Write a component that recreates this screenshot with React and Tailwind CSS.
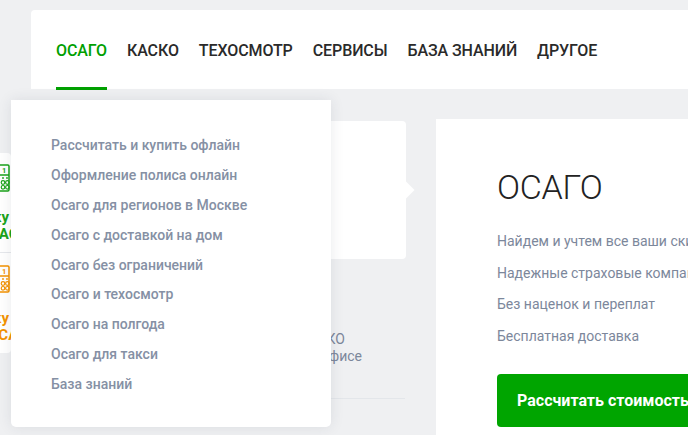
import React from "react";

const navItems = ["ОСАГО", "КАСКО", "ТЕХОСМОТР", "СЕРВИСЫ", "БАЗА ЗНАНИЙ", "ДРУГОЕ"];
const menu = [
  "Рассчитать и купить офлайн",
  "Оформление полиса онлайн",
  "Осаго для регионов в Москве",
  "Осаго с доставкой на дом",
  "Осаго без ограничений",
  "Осаго и техосмотр",
  "Осаго на полгода",
  "Осаго для такси",
  "База знаний",
];
const bullets = [
  "Найдем и учтем все ваши скидки",
  "Надежные страховые компании",
  "Без наценок и переплат",
  "Бесплатная доставка",
];

function TicketIcon({ color }) {
  return (
    <svg width="40" height="28" viewBox="0 0 40 28" fill="none">
      <rect x="1" y="1" width="38" height="26" rx="1.2" stroke={color} strokeWidth="1.5" />
      <line x1="1" y1="11" x2="39" y2="11" stroke={color} strokeWidth="1.5" />
      <text x="32" y="9" fill={color} fontSize="7.5" fontWeight="700" fontFamily="Roboto, sans-serif">1</text>
      <circle cx="33" cy="14" r="0.9" fill={color} />
      <circle cx="37" cy="14" r="0.9" fill={color} />
      <circle cx="33" cy="18.5" r="1.8" stroke={color} strokeWidth="1.2" />
      <circle cx="33" cy="23.3" r="1.8" stroke={color} strokeWidth="1.2" />
      <circle cx="37.4" cy="18.5" r="1.8" stroke={color} strokeWidth="1.2" />
      <circle cx="37.4" cy="23.3" r="1.8" stroke={color} strokeWidth="1.2" />
    </svg>
  );
}

function PromoBlock({ color, line1, line2, shift, border, pt }) {
  return (
    <div className={`h-[100px] flex flex-col items-end pr-[1px] ${pt} ${border ? "border-b border-[#e6e8ec]" : ""}`}>
      <TicketIcon color={color} />
      <div className="mt-[17px] w-full text-[15px] font-bold leading-[17px] whitespace-nowrap" style={{ color }}>
        <div className="text-right pr-[1px]">{line1}</div>
        <div className={shift}>{line2}</div>
      </div>
    </div>
  );
}

export default function App() {
  return (
    <div className="relative w-[688px] h-[435px] overflow-hidden bg-[#eff0f2] font-['Roboto',sans-serif]">
      {/* Header */}
      <div className="ml-[31px] mt-[10px] h-[79px] bg-white rounded-tl-[4px] flex items-stretch pl-[25px] gap-[20px]">
        {navItems.map((item, i) => (
          <div key={item} className="relative flex items-center pt-[2px]">
            <span
              className={`text-[16px] font-medium tracking-[-0.1px] ${i === 0 ? "text-[#00a000]" : "text-[#2a2a2a]"}`}
            >
              {item}
            </span>
            {i === 0 && <div className="absolute left-0 right-0 bottom-[-1px] h-[3px] bg-[#00a000]" />}
          </div>
        ))}
      </div>

      {/* Body */}
      <div className="flex mt-[31px]">
        {/* Column A: partial card on the left */}
        <div className="ml-[-129px] w-[140px] shrink-0 pt-[33px]">
          <div className="bg-white rounded-[4px] h-[200px] flex flex-col">
            <PromoBlock color="#1aa31a" line1="Скидку" line2="КАСКО" shift="pl-[118px]" pt="pt-[11px]" border />
            <PromoBlock color="#f39200" line1="Скидку" line2="ОСАГО" shift="pl-[117px]" pt="pt-[12px]" />
          </div>
        </div>

        {/* Column B */}
        <div className="ml-[20px] w-[375px] shrink-0 pt-[1px]">
          <div className="relative bg-white rounded-[4px] h-[138px]">
            <div className="absolute right-[-6px] top-[63px] w-[12px] h-[12px] bg-white rotate-45" />
          </div>
          <div className="mt-[72px] text-[14px] leading-[17px] text-[#7c879b]">
            <div className="text-right pr-[61px]">ОСАГО и КАСКО</div>
            <div className="text-right pr-[44px]">в нашем офисе</div>
          </div>
          <div className="mt-[33px] w-[374px] border-t border-[#e3e6ea]" />
        </div>

        {/* Column C: main card */}
        <div className="ml-[30px] w-[300px] shrink-0 bg-white h-[400px] mt-[-1px] pl-[61px] pt-[48px]">
          <h1 className="text-[34px] font-light leading-[40px] text-[#222] tracking-[-0.3px]">ОСАГО</h1>
          <div className="mt-[24px] flex flex-col gap-[11.7px]">
            {bullets.map((b) => (
              <div key={b} className="text-[14px] leading-[20px] text-[#7c879b] whitespace-nowrap">
                {b}
              </div>
            ))}
          </div>
          <button className="mt-[28px] h-[53px] w-[260px] bg-[#00a500] rounded-[4px] text-white text-[16px] font-bold text-left pl-[20px] whitespace-nowrap">
            Рассчитать стоимость
          </button>
        </div>
      </div>

      {/* Dropdown */}
      <div className="absolute left-[11px] top-[100px] w-[320px] h-[327px] bg-white rounded-b-[5px] shadow-[0_0_14px_rgba(40,50,70,0.10)] pl-[40px] pt-[31px]">
        {menu.map((m) => (
          <div key={m} className="h-[29.8px] flex items-center text-[14px] font-medium text-[#8590a4] whitespace-nowrap">
            {m}
          </div>
        ))}
      </div>
    </div>
  );
}
